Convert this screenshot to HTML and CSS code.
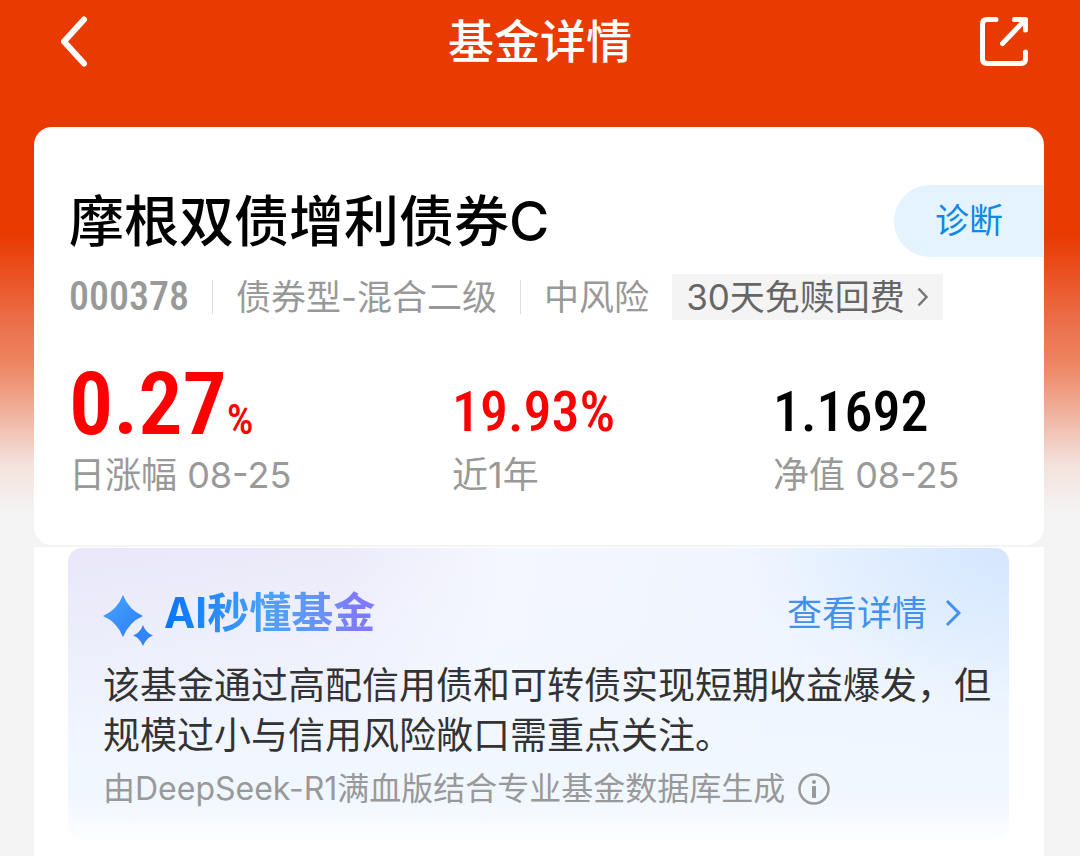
FILE: index.html
```html
<!DOCTYPE html>
<html lang="zh-CN">
<head>
  <meta charset="UTF-8" />
  <meta name="viewport" content="width=device-width, initial-scale=1.0" />
  <title>基金详情</title>
  <link rel="stylesheet" href="styles.css">
</head>
<body>
  <header class="topbar">
    <button class="icon-btn" type="button" aria-label="返回">
      <svg width="28" height="52" viewBox="0 0 28 52" fill="none" stroke="#fff" stroke-width="6" stroke-linecap="round" stroke-linejoin="round">
        <path d="M24 3.500L4 25.500L24 47.500" />
      </svg>
    </button>
    <h1>基金详情</h1>
    <button class="icon-btn" type="button" aria-label="分享">
      <svg width="50" height="52" viewBox="0 0 50 52" fill="none" stroke="#fff" stroke-width="5" stroke-linecap="round" stroke-linejoin="round">
        <path d="M17 3.500H8Q3.500 3.500 3.500 8V43Q3.500 47.500 8 47.500H42Q46.500 47.500 46.500 43V36" />
        <path d="M35.500 3.500H46.500V14M45 5L23.500 27.500" />
      </svg>
    </button>
  </header>

  <main>
    <section class="card">
      <div class="name-row">
        <h2>摩根双债增利债券C</h2>
        <a class="diagnose" href="#diagnose">诊断</a>
      </div>
      <div class="meta">
        <span class="code">000378</span>
        <span class="type">债券型-混合二级</span>
        <span class="risk">中风险</span>
        <a class="fee" href="#fee">30天免赎回费
          <svg width="12" height="20" viewBox="0 0 12 20" fill="none" stroke="#777" stroke-width="2.500">
            <path d="M1.500 1.500L9.500 10L1.500 18.500" />
          </svg>
        </a>
      </div>
      <dl class="stats">
        <div>
          <dd class="up big">0.27<small>%</small></dd>
          <dt>日涨幅 08-25</dt>
        </div>
        <div>
          <dd class="up">19.93%</dd>
          <dt>近1年</dt>
        </div>
        <div>
          <dd>1.1692</dd>
          <dt>净值 08-25</dt>
        </div>
      </dl>
    </section>

    <section class="ai-wrap">
      <div class="ai">
        <div class="ai-head">
          <svg width="52" height="70" viewBox="0 -17 52 70">
            <defs>
              <linearGradient id="star" x1="0" y1="0" x2="1" y2="1">
                <stop offset="0" stop-color="#45a6ff" />
                <stop offset="1" stop-color="#2f7cf8" />
              </linearGradient>
            </defs>
            <path fill="url(#star)" d="M20 0Q26 15 40 21Q26 27 20 42Q14 27 0 21Q14 15 20 0Z" />
            <path fill="#3284fb" d="M40 30Q43 38 50 40.500Q43 43 40 51Q37 43 30 40.500Q37 38 40 30Z" />
          </svg>
          <h3>AI秒懂基金</h3>
          <a class="more" href="#detail">查看详情
            <svg width="16" height="28" viewBox="0 0 16 28" fill="none" stroke="#4291ec" stroke-width="3">
              <path d="M2 2L14 14L2 26" />
            </svg>
          </a>
        </div>
        <p class="summary">该基金通过高配信用债和可转债实现短期收益爆发，但规模过小与信用风险敞口需重点关注。</p>
        <p class="source">由DeepSeek-R1满血版结合专业基金数据库生成
          <svg width="32" height="32" viewBox="0 0 32 32" fill="none" stroke="#999">
            <circle cx="16" cy="16" r="14.500" stroke-width="2.500" />
            <path d="M16 13V25" stroke-width="4" />
            <circle cx="16" cy="9" r="2" fill="#999" stroke="none" />
          </svg>
        </p>
      </div>
    </section>
  </main>
</body>
</html>
```
FILE: styles.css
```css
* {
  box-sizing: border-box;
  margin: 0;
  padding: 0;
}
body {
  font-family: Inter, "Noto Sans CJK SC", sans-serif;
  color: #000;
  background: #f4f4f4 linear-gradient(#e93a02 0, #e93a02 235px, #ec7350 330px, #ee8562 365px, #f0b8a6 420px, #f3e2dd 465px, #f4f4f4 515px) no-repeat;
}
a {
  text-decoration: none;
}
svg {
  display: block;
  flex: none;
}
.topbar {
  display: flex;
  align-items: center;
  justify-content: space-between;
  height: 84px;
  padding: 0 51px 0 60px;
}
.topbar h1 {
  color: #fff;
  font-size: 46px;
  font-weight: 500;
  line-height: 60px;
  padding: 0 0 2px 13px;
}
.icon-btn {
  background: none;
  border: none;
  cursor: pointer;
}
main {
  margin: 43px 36px 0 34px;
}
.card {
  background: #fff;
  border-radius: 18px;
  padding: 58px 0 47px 35px;
}
.name-row {
  display: flex;
  align-items: center;
  justify-content: space-between;
}
.name-row h2 {
  font-size: 55px;
  font-weight: 500;
  line-height: 72px;
}
.diagnose {
  width: 150px;
  padding-left: 41px;
  border-radius: 36px 0 0 36px;
  background: #e5f3ff;
  color: #0f88e8;
  font-size: 34px;
  line-height: 72px;
}
.meta {
  display: flex;
  align-items: center;
  margin-top: 17px;
  color: #999;
  font-size: 35px;
  line-height: 46px;
  white-space: nowrap;
}
.code, .stats dd {
  font-family: "Roboto Condensed", "Liberation Sans Narrow", Roboto, sans-serif;
  font-weight: 500;
}
.code {
  font-size: 40px;
}
.type, .risk {
  position: relative;
  margin-left: 23px;
  padding-left: 24px;
}
.type::before, .risk::before {
  content: "";
  position: absolute;
  left: 0;
  top: 6px;
  height: 34px;
  border-left: 1px solid #ddd;
}
.fee {
  display: flex;
  align-items: center;
  gap: 12px;
  margin-left: 23px;
  padding: 0 14px;
  background: #f4f4f4;
  color: #666;
}
.stats {
  display: grid;
  grid-template-columns: 383fr 321fr 236fr;
  margin: 36px 35px 0 0;
}
.stats dd {
  height: 96px;
  padding-top: 10px;
  font-size: 56px;
  line-height: 92px;
}
.stats .big {
  padding-top: 2px;
  font-size: 88px;
  font-weight: 600;
}
.stats small {
  font-size: 42px;
  font-weight: 500;
}
.stats dt {
  color: #999;
  font-size: 36px;
  line-height: 46px;
}
.up {
  color: #fe0000;
}
.ai-wrap {
  margin-top: 2px;
  padding: 1px 35px 16px 34px;
  background: #fff;
}
.ai {
  padding: 39px 16px 28px 35px;
  border-radius: 14px;
  background:
    linear-gradient(rgba(255, 255, 255, 0) 85%, rgba(255, 255, 255, 0.8)),
    radial-gradient(ellipse 260px 160px at 100% 0, #d5e7fe, rgba(213, 231, 254, 0)),
    linear-gradient(rgba(241, 247, 255, 0), #f1f7ff 75%),
    linear-gradient(100deg, #e9e7f9 0, #edebfa 28%, #f5f7fe 44%, #edf4ff 80%, #e4efff);
}
.ai-head {
  display: flex;
  align-items: center;
  height: 52px;
}
.ai-head h3 {
  margin-left: 9px;
  font-size: 42px;
  font-weight: bold;
  line-height: 52px;
  color: transparent;
  background: linear-gradient(90deg, #0575fa, #4aa2f7 48%, #6594f8 72%, #7d7cf8 90%);
  background-clip: text;
  -webkit-background-clip: text;
}
.more {
  display: flex;
  align-items: center;
  gap: 18px;
  margin: 0 32px 0 auto;
  color: #4291ec;
  font-size: 35px;
  line-height: 46px;
}
.summary {
  margin-top: 22px;
  color: #333;
  font-size: 37px;
  line-height: 50px;
}
.source {
  display: flex;
  align-items: center;
  gap: 13px;
  margin-top: 5px;
  color: #999;
  font-size: 32px;
  line-height: 46px;
}
```
